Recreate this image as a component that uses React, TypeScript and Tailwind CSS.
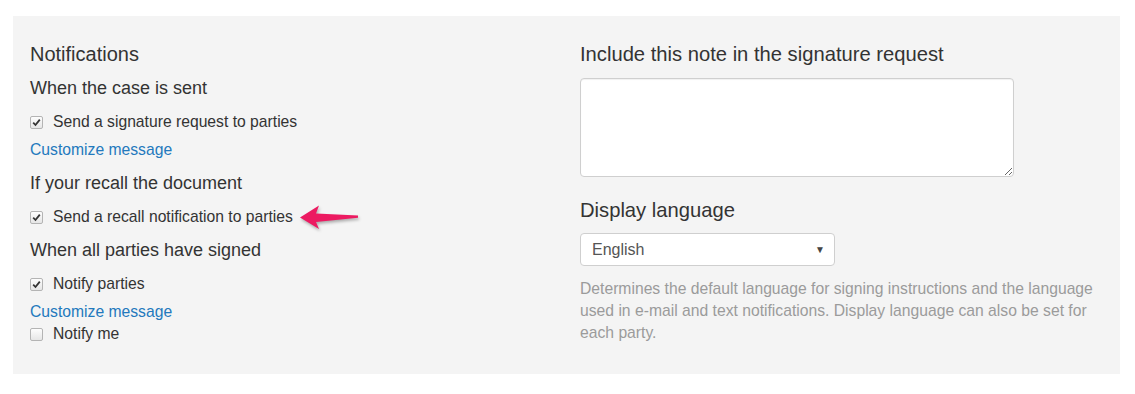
import { useState } from 'react';

function Check({ checked, label, children }: { checked: boolean, label: string, children?: React.ReactNode }) {
    return (
        <div className="flex items-center h-[22px] text-[15.7px] leading-[22px] text-[#333]">
            <span className="w-[13px] h-[13px] rounded-[2px] border border-[#b4b4b4] bg-gradient-to-b from-[#fdfdfd] to-[#e6e6e6] flex items-center justify-center">
                {checked ? (
                    <svg width="9" height="9" viewBox="0 0 9 9">
                        <path d="M1.2 4.6 L3.5 7 L7.8 1.6" fill="none" stroke="#333" strokeWidth="1.8" />
                    </svg>
                ) : null}
            </span>
            <span className="ml-[10px]">{label}</span>
            {children}
        </div>
    );
}

function PinkArrow() {
    return (
        <svg className="ml-[6px] drop-shadow-[1px_2px_1.5px_rgba(0,0,0,0.3)]" width="60" height="26" viewBox="0 0 60 26">
            <path d="M1 13.5 L20 1.5 L17 9.5 L59 11.5 L59 13.8 L17 18 L20 25 Z" fill="#ec1a61" />
        </svg>
    );
}

export default function App() {
    const [note, setNote] = useState('');

    return (
        <div className="w-[1135px] h-[394px] bg-white pt-[16px] pl-[13px] font-['Liberation_Sans',Arial,sans-serif]">
            <div className="w-[1107px] h-[358px] bg-[#f4f4f4] flex pt-[24px]">
                {/* left column */}
                <div className="w-[567px] pl-[17px] text-[#333]">
                    <div className="text-[20px] leading-[28px]">Notifications</div>
                    <div className="mt-[8px] text-[18px] leading-[24px]">When the case is sent</div>
                    <div className="mt-[11px]">
                        <Check checked label="Send a signature request to parties" />
                    </div>
                    <a className="mt-[6px] block text-[15.7px] leading-[22px] text-[#2379bd]" href="#">Customize message</a>
                    <div className="mt-[10px] text-[18px] leading-[24px]">If your recall the document</div>
                    <div className="mt-[11px]">
                        <Check checked label="Send a recall notification to parties">
                            <PinkArrow />
                        </Check>
                    </div>
                    <div className="mt-[10px] text-[18px] leading-[24px]">When all parties have signed</div>
                    <div className="mt-[11px]">
                        <Check checked label="Notify parties" />
                    </div>
                    <a className="mt-[6px] block text-[15.7px] leading-[22px] text-[#2379bd]" href="#">Customize message</a>
                    <Check checked={false} label="Notify me" />
                </div>

                {/* right column */}
                <div className="w-[527px] text-[#333]">
                    <div className="text-[20.2px] leading-[28px]">Include this note in the signature request</div>
                    <textarea
                        value={note}
                        onChange={e => setNote(e.target.value)}
                        className="mt-[10px] block w-[434px] h-[99px] bg-white border border-[#cfcfcf] rounded-[4px] shadow-[inset_0_1px_1px_rgba(0,0,0,0.06)]"
                    />
                    <div className="mt-[19px] text-[20.2px] leading-[28px]">Display language</div>
                    <div className="mt-[9px] w-[255px] h-[33px] bg-white border border-[#cfcfcf] rounded-[4px] flex items-center justify-between pl-[11px] pr-[9px]">
                        <span className="text-[16px] text-[#555]">English</span>
                        <span className="text-[10px] text-[#444]">▼</span>
                    </div>
                    <p className="mt-[12px] w-[524px] text-[15.7px] leading-[22px] text-[#9b9b9b]">
                        Determines the default language for signing instructions and the language used in e-mail and text notifications. Display language can also be set for each party.
                    </p>
                </div>
            </div>
        </div>
    );
}
